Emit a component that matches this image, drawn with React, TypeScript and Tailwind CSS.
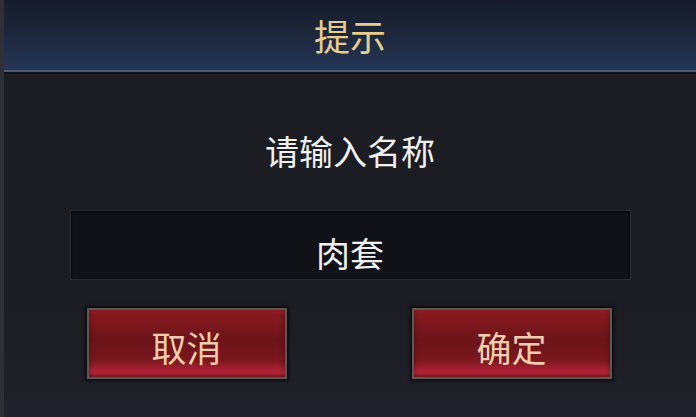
import React from "react";

const font = { fontFamily: '"Noto Sans CJK SC", "Noto Sans", sans-serif' };

function RedButton({ label }: { label: string }) {
  return (
    <div className="w-[200px] h-[71px] p-[2px] bg-[#5c5752] shadow-[0_0_3px_2px_rgba(0,0,0,0.6)]">
      <div className="w-full h-full flex items-center justify-center pt-[5px] bg-[linear-gradient(180deg,#a3222b_0%,#86191f_8%,#6c1519_45%,#7a171d_75%,#b8243a_94%,#8a1a25_100%)] shadow-[inset_0_0_6px_rgba(0,0,0,0.35)]">
        <span className="text-[35px] leading-none text-[#f2ccae]" style={font}>
          {label}
        </span>
      </div>
    </div>
  );
}

export default function App() {
  return (
    <div className="w-[696px] h-[417px] flex bg-[#1c1d22] overflow-hidden" style={font}>
      <div className="w-[4px] h-full bg-[#2f3036]" />
      <div className="flex-1 flex flex-col bg-[linear-gradient(180deg,#1c1d22_0%,#1c1d22_70%,#20212a_100%)]">
        <div className="h-[70px] flex items-center justify-center bg-[linear-gradient(180deg,#161c2a_0%,#1c2639_45%,#253656_100%)]">
          <span className="text-[36px] leading-none text-[#e6cc8e]">提示</span>
        </div>
        <div className="h-[2px] bg-[#4a5a78]" />
        <div className="h-[2px] bg-[#101116]" />
        <div className="flex flex-col items-center">
          <div className="mt-[60px] text-[34px] leading-none text-[#f0f0f0]">请输入名称</div>
          <div className="mt-[42px] w-[561px] h-[70px] flex items-center justify-center pt-[16px] bg-[#111217] border border-[#2b2c31] shadow-[inset_0_1px_3px_rgba(0,0,0,0.7)]">
            <span className="text-[34px] leading-none text-[#f2f2f2]">肉套</span>
          </div>
          <div className="mt-[28px] w-[561px] flex justify-between pl-[17px] pr-[19px]">
            <RedButton label="取消" />
            <RedButton label="确定" />
          </div>
        </div>
      </div>
    </div>
  );
}
